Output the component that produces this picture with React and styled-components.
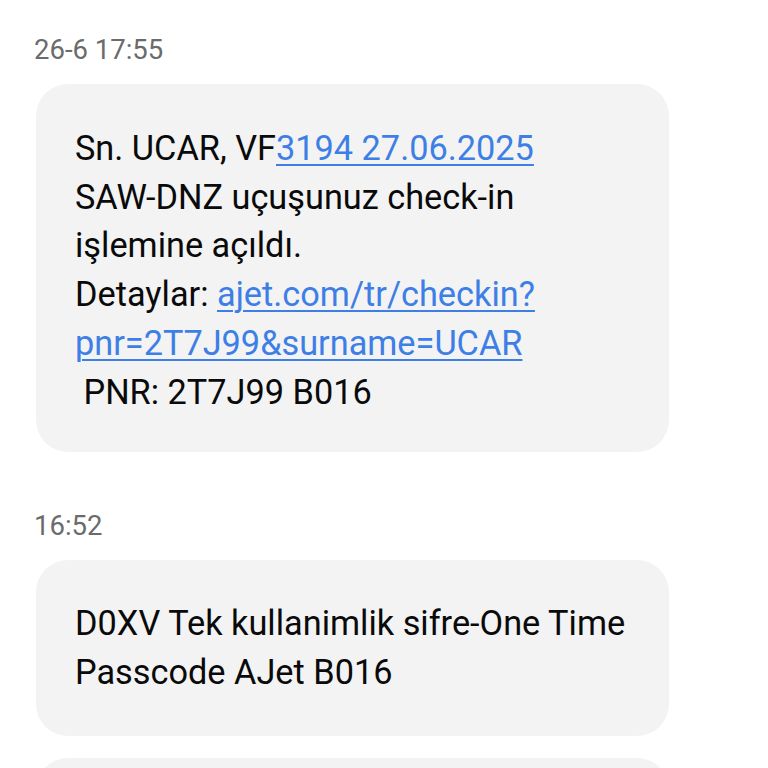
import React from "react";
import styled, { createGlobalStyle } from "styled-components";

const Global = createGlobalStyle`
  html, body { margin: 0; padding: 0; background: #ffffff; }
  body { font-family: Roboto, "Noto Sans", sans-serif; -webkit-font-smoothing: antialiased; }
`;

const Thread = styled.div`
  display: flex;
  flex-direction: column;
  padding: 34px 99px 0 36px;
  width: 768px;
  box-sizing: border-box;
  height: 768px;
  overflow: hidden;
`;

const Stamp = styled.div`
  font-size: 27.5px;
  line-height: 32px;
  color: #6b6b6b;
  margin-left: -2px;
  margin-top: ${(p) => p.$top || 0}px;
  margin-bottom: 18px;
`;

const Bubble = styled.div`
  background: #f3f3f3;
  border-radius: 32px;
  padding: ${(p) => p.$pt || 39}px 39px ${(p) => p.$pb || 39}px 39px;
  margin-bottom: 22px;
  font-size: 34.3px;
  line-height: 48.7px;
  color: #0a0a0a;
  white-space: pre;
  flex-shrink: 0;
`;

const Line = styled.div``;

const Link = styled.span`
  color: #3d7fe6;
  text-decoration: underline;
  text-decoration-thickness: 2px;
  text-underline-offset: 4px;
`;

export default function App() {
  return (
    <>
      <Global />
      <Thread>
        <Stamp>26-6 17:55</Stamp>
        <Bubble $pt={40} $pb={36}>
          <Line>
            Sn. UCAR, VF<Link>3194 27.06.2025</Link>
          </Line>
          <Line>SAW-DNZ uçuşunuz check-in</Line>
          <Line>işlemine açıldı.</Line>
          <Line>
            Detaylar: <Link>ajet.com/tr/checkin?</Link>
          </Line>
          <Line>
            <Link>pnr=2T7J99&amp;surname=UCAR</Link>
          </Line>
          <Line>{" PNR: 2T7J99 B016"}</Line>
        </Bubble>
        <Stamp $top={36}>16:52</Stamp>
        <Bubble>
          <Line>D0XV Tek kullanimlik sifre-One Time</Line>
          <Line>Passcode AJet B016</Line>
        </Bubble>
        <Bubble>
          <Line>&nbsp;</Line>
        </Bubble>
      </Thread>
    </>
  );
}
